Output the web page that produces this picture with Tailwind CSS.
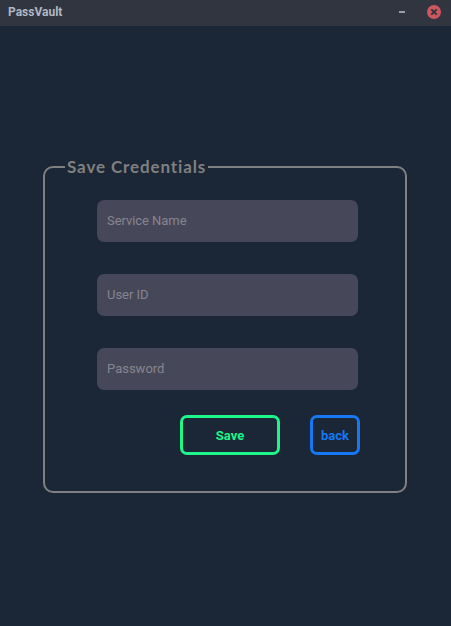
<!DOCTYPE html>
<html lang="en">
<head>
<meta charset="utf-8">
<title>PassVault</title>
<script src="https://cdn.jsdelivr.net/npm/@tailwindcss/browser@4"></script>
</head>
<body class="flex h-[626px] w-[451px] flex-col overflow-hidden bg-[#1b2636] font-['Roboto',sans-serif]">
  <header class="flex h-[26px] shrink-0 items-start bg-[#31353f] pl-2 pr-[10px]">
    <h1 class="mt-1 text-[12px] leading-4 font-bold text-[#afb8c6]">PassVault</h1>
    <div class="ml-auto flex h-6 items-center gap-[22px]">
      <span class="h-0.5 w-1.5 bg-[#9a9ea9]"></span>
      <svg class="size-3.5" viewBox="0 0 14 14"><circle cx="7" cy="7" r="7" fill="#cc575d"/><path d="M4.3 4.3l5.4 5.4M9.7 4.3l-5.4 5.4" stroke="#2f343f" stroke-width="1.9"/></svg>
    </div>
  </header>
  <main class="flex-1 pt-[131px] pl-[43px]">
    <fieldset class="h-[336px] w-[364px] rounded-[10px] border-2 border-[#808080] pl-5">
      <legend class="h-5 w-[143px] pl-[2px] font-['Lato',sans-serif] text-[17px] leading-5 font-bold tracking-[0.88px] whitespace-nowrap text-[#808080]">Save Credentials</legend>
      <div class="ml-8 mt-[23px] flex w-[261px] flex-col gap-8">
        <input type="text" placeholder="Service Name" class="h-[42px] rounded-[7px] bg-[#47475a] px-[10px] pb-[2px] text-[13px] tracking-[-0.05px] text-white placeholder:text-[#86868e]">
        <input type="text" placeholder="User ID" class="h-[42px] rounded-[7px] bg-[#47475a] px-[10px] pb-[2px] text-[13px] tracking-[-0.05px] text-white placeholder:text-[#86868e]">
        <input type="password" placeholder="Password" class="h-[42px] rounded-[7px] bg-[#47475a] px-[10px] pb-[2px] text-[13px] text-white placeholder:text-[#86868e]">
      </div>
      <div class="mt-[25px] flex gap-[30px] pl-[115px]">
        <button class="h-10 w-[100px] rounded-[7px] border-3 border-[#1df689] pt-[2px] text-[13px] font-bold text-[#1df689]">Save</button>
        <button class="h-10 w-[50px] rounded-[7px] border-3 border-[#1678f5] pt-[2px] text-[13px] font-bold text-[#1678f5]">back</button>
      </div>
    </fieldset>
  </main>
</body>
</html>
